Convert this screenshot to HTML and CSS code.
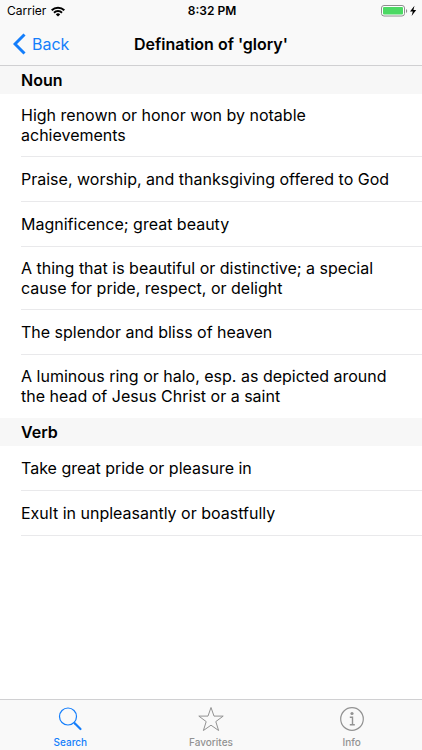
FILE: index.html
```
<!DOCTYPE html>
<html lang="en">
<head>
<meta charset="utf-8">
<meta name="viewport" content="width=device-width, initial-scale=1">
<title>Defination of 'glory'</title>
<link rel="stylesheet" href="styles.css">
</head>
<body>
<header class="top">
  <div class="status">
    <div class="carrier">
      <span>Carrier</span>
      <svg width="14" height="11" viewBox="0 0 14 11" aria-hidden="true"><g fill="none" stroke="#000" stroke-width="2"><path d="M.7 4.2a9 9 0 0 1 12.6 0"/><path d="M3 6.7a5.7 5.7 0 0 1 8 0"/></g><path d="M4.8 8.4a3.2 3.2 0 0 1 4.4 0L7 10.6z"/></svg>
    </div>
    <time class="clock">8:32 PM</time>
    <div class="power">
      <svg width="36" height="12" viewBox="0 0 36 12" aria-hidden="true"><rect x=".5" y=".5" width="23" height="10.500" rx="2.500" fill="#fff" stroke="#8e8e8e"/><rect x="2" y="2" width="20" height="7.500" rx="1" fill="#4cd964"/><path d="M25 4v4c1.600-.5 1.600-3.500 0-4z" fill="#8e8e8e"/><path d="M33.500.8 29 6.500h2.800L30.600 11 35.200 5h-2.800z"/></svg>
    </div>
  </div>
  <nav class="navbar">
    <a class="back" href="#">
      <svg width="13" height="22" viewBox="0 0 13 22" aria-hidden="true"><path d="M11.500 1.500 2 11l9.500 9.500" fill="none" stroke="#147efb" stroke-width="3"/></svg>
      <span>Back</span>
    </a>
    <h1 class="title">Defination of 'glory'</h1>
  </nav>
</header>
<main class="content">
  <section>
    <h2 class="heading">Noun</h2>
    <ul class="list">
      <li class="row two-line">High renown or honor won by notable achievements</li>
      <li class="row">Praise, worship, and thanksgiving offered to God</li>
      <li class="row">Magnificence; great beauty</li>
      <li class="row two-line">A thing that is beautiful or distinctive; a special cause for pride, respect, or delight</li>
      <li class="row">The splendor and bliss of heaven</li>
      <li class="row two-line last">A luminous ring or halo, esp. as depicted around the head of Jesus Christ or a saint</li>
    </ul>
  </section>
  <section>
    <h2 class="heading">Verb</h2>
    <ul class="list">
      <li class="row">Take great pride or pleasure in</li>
      <li class="row">Exult in unpleasantly or boastfully</li>
    </ul>
  </section>
</main>
<nav class="tabs">
  <a class="tab active" href="#">
    <svg width="28" height="28" viewBox="0 0 28 28" aria-hidden="true"><circle cx="12" cy="11.500" r="8.500" fill="none" stroke="currentColor" stroke-width="1.200"/><path d="m18 17.500 1.500 1.500" stroke="currentColor" stroke-width="1.200"/><path d="m19 18.500 5.500 5.500" stroke="currentColor" stroke-width="2.200" stroke-linecap="round"/></svg>
    <span>Search</span>
  </a>
  <a class="tab" href="#">
    <svg width="28" height="28" viewBox="0 0 28 28" aria-hidden="true"><path d="m14 2.500 3 8.600h9.200l-7.400 5.500 2.800 8.900L14 20.200l-7.600 5.300 2.800-8.900-7.400-5.500H11z" fill="none" stroke="currentColor"/></svg>
    <span>Favorites</span>
  </a>
  <a class="tab" href="#">
    <svg width="28" height="28" viewBox="0 0 28 28" aria-hidden="true"><circle cx="14" cy="14" r="11.300" fill="none" stroke="currentColor" stroke-width="1.200"/><circle cx="14" cy="8.500" r="1.600" fill="currentColor"/><path d="M11.800 12.200H14.500V19.800M11.800 19.800h5" fill="none" stroke="currentColor" stroke-width="1.400"/></svg>
    <span>Info</span>
  </a>
</nav>
</body>
</html>
```
FILE: styles.css
```
* {
  box-sizing: border-box;
}

body {
  margin: 0;
  min-height: 100vh;
  display: flex;
  flex-direction: column;
  background: #fff;
  color: #000;
  font: 16px/20px Inter, "Liberation Sans", sans-serif;
}

a {
  color: inherit;
  text-decoration: none;
}

svg {
  display: block;
  flex: none;
}

.top {
  background: #f9f9f9;
  border-bottom: 1px solid #d0d0d2;
}

.status {
  display: grid;
  grid-template-columns: 1fr auto 1fr;
  align-items: center;
  height: 22px;
  padding: 0 5px 0 7px;
  font-size: 12px;
}

.carrier {
  display: flex;
  align-items: center;
  gap: 5px;
}

.clock {
  font-weight: 600;
}

.power {
  justify-self: end;
}

.navbar {
  display: grid;
  grid-template-columns: 1fr auto 1fr;
  align-items: center;
  height: 43px;
  padding: 0 13px;
}

.back {
  display: flex;
  align-items: center;
  gap: 6px;
  color: #147efb;
}

.title,
.heading {
  margin: 0;
  font-size: 16px;
  font-weight: 600;
}

.content {
  flex: 1;
}

.heading {
  padding: 4px 21px;
  background: #f7f7f7;
}

.list {
  margin: 0;
  padding: 0 0 0 21px;
  list-style: none;
}

.row {
  padding: 12px 16px 12px 0;
  border-bottom: 1px solid #e9e9eb;
}

.two-line {
  padding-top: 11px;
  padding-bottom: 11px;
}

.last {
  border-bottom-color: transparent;
}

.tabs {
  display: grid;
  grid-template-columns: repeat(3, 1fr);
  height: 51px;
  background: #f9f9f9;
  border-top: 1px solid #d0d0d2;
}

.tab {
  display: flex;
  flex-direction: column;
  align-items: center;
  gap: 2px;
  padding-top: 5px;
  color: #929292;
  font-size: 10px;
  font-weight: 500;
  line-height: 14px;
}

.active {
  color: #147efb;
}
```
